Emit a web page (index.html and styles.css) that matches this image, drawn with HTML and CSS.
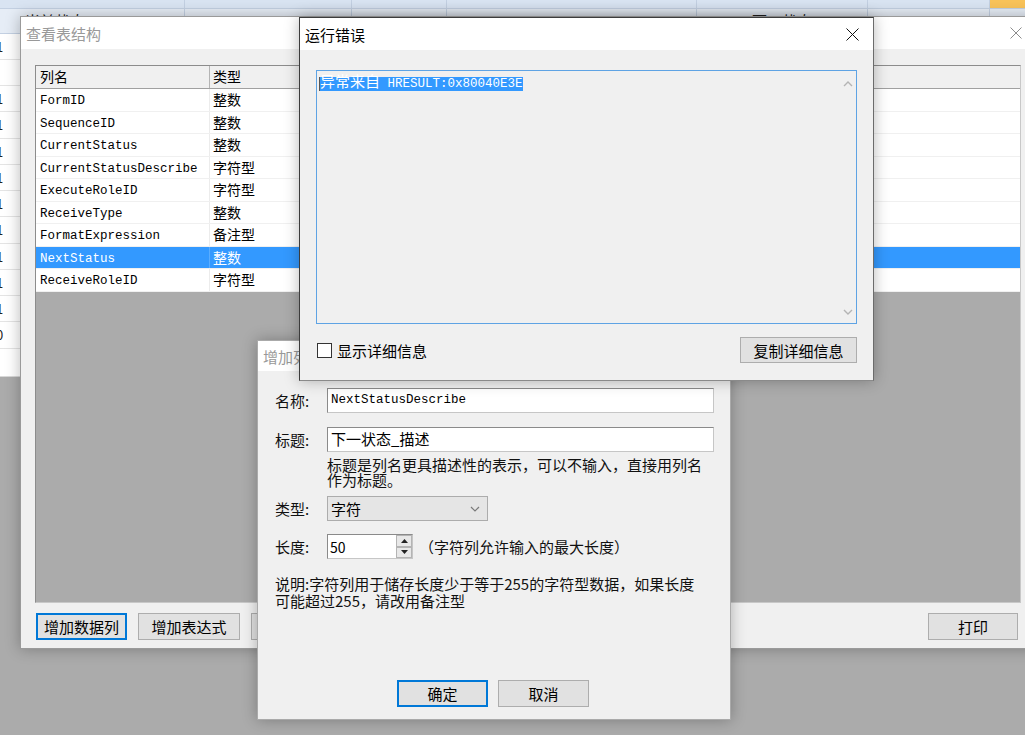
FILE: index.html
```html
<!DOCTYPE html>
<html lang="zh-CN">
<head>
  <meta charset="UTF-8">
  <title>查看表结构</title>
  <link rel="stylesheet" href="styles.css">
</head>
<body>
  <!-- background application grid -->
  <div class="bg-app">
    <div class="bg-band">
      <span class="bg-col w185"></span><span class="bg-col w167"></span><span class="bg-col w95"></span><span class="bg-col w250"></span><span class="bg-col w171"></span><span class="bg-col w122"></span><span class="bg-col orange"></span>
    </div>
    <div class="bg-head">
      <span class="bg-col w185 first">当前状态</span><span class="bg-col w167"></span><span class="bg-col w95"></span><span class="bg-col w250"></span><span class="bg-col w171 center">下一状态</span><span class="bg-col w122"></span><span class="bg-col"></span>
    </div>
    <div class="bg-rows">
      <div class="bg-row">1</div>
      <div class="bg-row"></div>
      <div class="bg-row">1</div>
      <div class="bg-row">1</div>
      <div class="bg-row">1</div>
      <div class="bg-row">1</div>
      <div class="bg-row">1</div>
      <div class="bg-row">1</div>
      <div class="bg-row">1</div>
      <div class="bg-row">1</div>
      <div class="bg-row">1</div>
      <div class="bg-row">0</div>
    </div>
  </div>

  <!-- 查看表结构 -->
  <div class="win win-struct">
    <div class="titlebar inactive">
      <span class="title">查看表结构</span>
      <span class="close-btn">
        <svg width="12" height="12" viewBox="0 0 12 12"><path d="M0.5 0.5L11.5 11.5M11.5 0.5L0.5 11.5" stroke="#8c8c8c" stroke-width="1" fill="none"/></svg>
      </span>
    </div>
    <div class="struct-body">
      <div class="grid">
        <div class="grid-head">
          <span class="cell c-name">列名</span><span class="cell c-type">类型</span><span class="cell c-rest"></span>
        </div>
        <div class="grid-row"><span class="cell c-name mono">FormID</span><span class="cell c-type">整数</span><span class="cell c-rest"></span></div>
        <div class="grid-row"><span class="cell c-name mono">SequenceID</span><span class="cell c-type">整数</span><span class="cell c-rest"></span></div>
        <div class="grid-row"><span class="cell c-name mono">CurrentStatus</span><span class="cell c-type">整数</span><span class="cell c-rest"></span></div>
        <div class="grid-row"><span class="cell c-name mono">CurrentStatusDescribe</span><span class="cell c-type">字符型</span><span class="cell c-rest"></span></div>
        <div class="grid-row"><span class="cell c-name mono">ExecuteRoleID</span><span class="cell c-type">字符型</span><span class="cell c-rest"></span></div>
        <div class="grid-row"><span class="cell c-name mono">ReceiveType</span><span class="cell c-type">整数</span><span class="cell c-rest"></span></div>
        <div class="grid-row"><span class="cell c-name mono">FormatExpression</span><span class="cell c-type">备注型</span><span class="cell c-rest"></span></div>
        <div class="grid-row selected"><span class="cell c-name mono">NextStatus</span><span class="cell c-type">整数</span><span class="cell c-rest"></span></div>
        <div class="grid-row"><span class="cell c-name mono">ReceiveRoleID</span><span class="cell c-type">字符型</span><span class="cell c-rest"></span></div>
      </div>
      <div class="struct-buttons">
        <button class="btn focused w91">增加数据列</button>
        <button class="btn w102">增加表达式</button>
        <button class="btn w100">修改</button>
        <button class="btn w100">删除</button>
        <button class="btn w100">上移</button>
        <button class="btn w100">下移</button>
        <button class="btn print">打印</button>
      </div>
    </div>
  </div>

  <!-- 增加列 -->
  <div class="win win-add">
    <div class="titlebar inactive short">
      <span class="title">增加列</span>
    </div>
    <div class="add-body">
      <div class="form-row">
        <label class="form-label">名称:</label>
        <div class="textbox wide mono">NextStatusDescribe</div>
      </div>
      <div class="form-row">
        <label class="form-label">标题:</label>
        <div class="textbox wide">下一状态_描述</div>
      </div>
      <p class="hint">标题是列名更具描述性的表示，可以不输入，直接用列名<br>作为标题。</p>
      <div class="form-row tight">
        <label class="form-label">类型:</label>
        <div class="combo">
          <span>字符</span>
          <svg width="10" height="6" viewBox="0 0 10 6"><path d="M1 1L5 5L9 1" stroke="#7a7a7a" stroke-width="1.2" fill="none"/></svg>
        </div>
      </div>
      <div class="form-row tight">
        <label class="form-label">长度:</label>
        <div class="spinner">
          <span class="spin-value">50</span>
          <span class="spin-btns">
            <span class="spin-btn"><svg width="7" height="4" viewBox="0 0 7 4"><path d="M0 4L3.5 0L7 4Z" fill="#222"/></svg></span>
            <span class="spin-btn"><svg width="7" height="4" viewBox="0 0 7 4"><path d="M0 0L3.5 4L7 0Z" fill="#222"/></svg></span>
          </span>
        </div>
        <span class="spin-note">（字符列允许输入的最大长度）</span>
      </div>
      <p class="desc">说明:字符列用于储存长度少于等于255的字符型数据，如果长度<br>可能超过255，请改用备注型</p>
      <div class="add-buttons">
        <button class="btn focused w91">确定</button>
        <button class="btn w91">取消</button>
      </div>
    </div>
  </div>

  <!-- 运行错误 -->
  <div class="win win-error">
    <div class="titlebar">
      <span class="title">运行错误</span>
      <span class="close-btn dark">
        <svg width="13" height="13" viewBox="0 0 13 13"><path d="M0.5 0.5L12.5 12.5M12.5 0.5L0.5 12.5" stroke="#111" stroke-width="1" fill="none"/></svg>
      </span>
    </div>
    <div class="error-body">
      <div class="memo">
        <div class="memo-text"><span class="sel"><span class="cjk">异常来自</span> HRESULT:0x80040E3E</span></div>
        <div class="memo-scroll">
          <svg width="10" height="6" viewBox="0 0 10 6"><path d="M1 5L5 1L9 5" stroke="#b4b4b4" stroke-width="1.4" fill="none"/></svg>
          <svg width="10" height="6" viewBox="0 0 10 6"><path d="M1 1L5 5L9 1" stroke="#b4b4b4" stroke-width="1.4" fill="none"/></svg>
        </div>
      </div>
      <div class="error-foot">
        <label class="check"><span class="check-box"></span>显示详细信息</label>
        <button class="btn copy">复制详细信息</button>
      </div>
    </div>
  </div>
</body>
</html>
```

FILE: styles.css
```css
body {
  margin: 0;
  width: 1025px;
  height: 735px;
  position: relative;
  overflow: hidden;
  background-color: #ababab;
  font-family: "Noto Sans CJK SC", "Liberation Sans", sans-serif;
  font-size: 15px;
  color: #000;
}
.mono {
  font-family: "Liberation Mono", "Noto Sans CJK SC", monospace;
  font-size: 12.5px;
  color: #000;
}

/* background app */
.bg-app {
  position: absolute;
  left: 0;
  top: 0;
  width: 1025px;
  height: 376px;
  background-color: #fff;
  border-bottom: 1px solid #d8d8d8;
}
.bg-band,
.bg-head {
  display: flex;
  height: 8px;
  background-color: #d9e4f2;
  border-bottom: 1px solid #c3d0e2;
}
.bg-head {
  height: 23.5px;
  background-color: #e6edf6;
  line-height: 24px;
  color: #222;
}
.bg-col {
  flex: none;
  height: 100%;
  border-right: 1px solid #c3d0e2;
  box-sizing: border-box;
  white-space: nowrap;
  overflow: hidden;
}
.bg-col:last-child {
  flex: 1;
  border-right: none;
}
.bg-col.first {
  padding-left: 25px;
}
.bg-col.center {
  text-align: center;
}
.w185 { width: 185px; }
.w167 { width: 167px; }
.w95 { width: 95px; }
.w250 { width: 250px; }
.w171 { width: 171px; }
.w122 { width: 122px; }
.bg-col.orange {
  background-color: #f9c35a;
}
.bg-row {
  height: 26.25px;
  box-sizing: border-box;
  border-bottom: 1px solid #e4e4e4;
  line-height: 25px;
  margin-left: -4px;
  font-size: 13px;
  color: #222;
}

/* windows */
.win {
  position: absolute;
  box-sizing: border-box;
  background-color: #f0f0f0;
  border: 1px solid #9a9a9a;
  box-shadow: 0 0 14px rgba(0, 0, 0, 0.28);
}
.titlebar {
  display: flex;
  align-items: center;
  height: 32px;
  background-color: #fff;
  padding-left: 4px;
}
.titlebar.inactive .title {
  color: #999;
}
.title {
  flex: 1;
  white-space: nowrap;
}
.close-btn {
  width: 46px;
  height: 100%;
  display: flex;
  align-items: center;
  justify-content: center;
}
.close-btn.dark {
  width: 42px;
}

.win-struct {
  left: 20px;
  top: 16px;
  width: 1020px;
  height: 633px;
}
.struct-body {
  padding: 16px 0 0 14px;
}
.grid {
  width: 986px;
  height: 538px;
  box-sizing: border-box;
  border: 1px solid #8c8c8c;
  border-right-color: #c8c8c8;
  border-bottom-color: #c8c8c8;
  background-color: #ababab;
}
.grid-head,
.grid-row {
  display: flex;
  box-sizing: border-box;
}
.grid-head {
  height: 23px;
  background-color: #f0f0f0;
  border-bottom: 1px solid #a0a0a0;
  line-height: 21px;
  font-size: 14px;
}
.grid-row {
  height: 22.5px;
  background-color: #fff;
  border-bottom: 1px solid #f0f0f0;
  line-height: 21px;
  font-size: 14px;
}
.cell {
  flex: none;
  box-sizing: border-box;
  padding-left: 4px;
  white-space: nowrap;
  overflow: hidden;
  border-right: 1px solid #ececec;
}
.grid-row .cell.mono {
  padding-top: 2px;
}
.grid-head .cell {
  border-right-color: #b4b4b4;
}
.c-name { width: 174px; }
.c-type { width: 100px; padding-left: 3px; }
.c-rest { flex: 1; border-right: none; }
.grid-row.selected {
  background-color: #3399ff;
  color: #fff;
}
.grid-row.selected .cell {
  color: #fff;
  border-right-color: #5aadff;
}

.struct-buttons {
  display: flex;
  gap: 11px;
  margin-top: 10px;
  padding-left: 1px;
  width: 982px;
}
.btn {
  height: 27px;
  box-sizing: border-box;
  background-color: #e1e1e1;
  border: 1px solid #adadad;
  font-family: "Noto Sans CJK SC", sans-serif;
  font-size: 15px;
  color: #000;
  padding: 0;
  line-height: 23px;
}
.btn.focused {
  border: 2px solid #0078d7;
}
.w91 { width: 91px; }
.w102 { width: 102px; }
.w100 { width: 110px; }
.btn.print {
  width: 90px;
  margin-left: auto;
}

/* add column dialog */
.win-add {
  left: 257px;
  top: 340px;
  width: 474px;
  height: 380px;
  border-color: #aaa;
}
.titlebar.short {
  height: 30px;
}
.add-body {
  padding: 17px 16px 0 17px;
}
.form-row {
  display: flex;
  align-items: center;
  margin-bottom: 14px;
}
.form-row.tight {
  margin-bottom: 13px;
}
.form-label {
  width: 52px;
  flex: none;
  color: #111;
}
.textbox {
  height: 25px;
  box-sizing: border-box;
  background-color: #fff;
  border: 1px solid #7a7a7a;
  border-color: #8a8a8a #c6c6c6 #c6c6c6 #8a8a8a;
  padding-left: 3px;
  line-height: 22px;
  white-space: nowrap;
}
.textbox.wide {
  width: 387px;
}
.hint {
  margin: -9px 0 9px 52px;
  line-height: 15px;
  color: #111;
}
.combo {
  width: 161px;
  height: 25px;
  box-sizing: border-box;
  background-color: #e5e5e5;
  border: 1px solid #acacac;
  display: flex;
  align-items: center;
  justify-content: space-between;
  padding: 0 7px 0 3px;
}
.spinner {
  width: 86px;
  height: 25px;
  box-sizing: border-box;
  background-color: #fff;
  border: 1px solid #8a8a8a;
  border-right-color: #c6c6c6;
  border-bottom-color: #c6c6c6;
  display: flex;
  align-items: center;
  justify-content: space-between;
  padding-left: 2px;
  font-size: 14px;
}
.spin-btns {
  display: flex;
  flex-direction: column;
  width: 16px;
  height: 23px;
}
.spin-btn {
  flex: 1;
  display: flex;
  align-items: center;
  justify-content: center;
  background-color: #e8e8e8;
  border: 1px solid #b4b4b4;
  box-sizing: border-box;
}
.spin-note {
  margin-left: 6px;
  color: #111;
}
.desc {
  margin: 16px 0 0 0;
  line-height: 17px;
  color: #111;
}
.add-buttons {
  display: flex;
  gap: 10px;
  margin: 71px 0 0 122px;
}

/* error dialog */
.win-error {
  left: 299px;
  top: 17px;
  width: 575px;
  height: 364px;
  border-color: #3c3c3c;
  border-right-color: #6b6b6b;
  border-bottom-color: #8a8a8a;
}
.titlebar .title {
  padding-left: 1px;
}
.error-body {
  padding: 20px 16px 0 16px;
}
.memo {
  height: 254px;
  box-sizing: border-box;
  border: 1px solid #5ea3e4;
  display: flex;
  background-color: #f0f0f0;
}
.memo-text {
  flex: 1;
  padding: 2px 0 0 2px;
  font-family: "Liberation Mono", monospace;
  font-size: 12.5px;
  line-height: 15px;
}
.sel {
  background-color: #3399ff;
  color: #fff;
  border-left: 1px solid #555;
}
.sel .cjk {
  font-family: "Noto Sans CJK SC", sans-serif;
  font-size: 15px;
}
.memo-scroll {
  width: 17px;
  display: flex;
  flex-direction: column;
  justify-content: space-between;
  align-items: center;
  padding: 10px 0 8px;
}
.error-foot {
  display: flex;
  align-items: center;
  justify-content: space-between;
  margin-top: 13px;
}
.check {
  display: flex;
  align-items: center;
  gap: 5px;
  padding-left: 1px;
}
.check-box {
  width: 13px;
  height: 13px;
  border: 1px solid #333;
  background-color: #fff;
}
.btn.copy {
  width: 117px;
  height: 26px;
}
```
